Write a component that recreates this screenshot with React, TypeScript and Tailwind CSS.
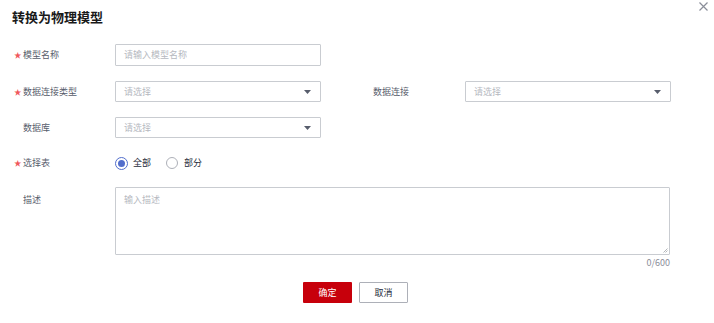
import React from "react";

const font = { fontFamily: '"Noto Sans CJK SC", "Noto Sans", sans-serif' };

function Label({ text, required }: { text: string; required?: boolean }) {
  return (
    <div className="flex w-[101px] shrink-0 items-center text-[9px] text-[#575d6c]">
      <span className="w-[9px] text-[7.5px] leading-none text-[#f0585d]">{required ? "★" : ""}</span>
      <span>{text}</span>
    </div>
  );
}

function Select({ w = "w-[206px]" }: { w?: string }) {
  return (
    <div className={`flex h-[21px] ${w} items-center justify-between rounded-[1px] border border-[#c9ccd1] pl-[8px] pr-[9px]`}>
      <span className="text-[9px] text-[#b6b9bf]">请选择</span>
      <svg width="7" height="4" viewBox="0 0 7 4">
        <path d="M0 0 H7 L3.5 4 Z" fill="#575d6c" />
      </svg>
    </div>
  );
}

export default function App() {
  return (
    <div className="relative h-[323px] w-[714px] bg-white" style={font}>
      <div className="absolute right-[6px] top-[2px]">
        <svg width="9" height="9" viewBox="0 0 9 9">
          <path d="M0.5 0.5 L8.5 8.5 M8.5 0.5 L0.5 8.5" stroke="#8a8e99" strokeWidth="1.2" />
        </svg>
      </div>
      <div className="pl-[12px] pt-[7px] text-[13px] font-bold leading-[20px] text-[#191919]">转换为物理模型</div>

      <div className="mt-[17px] flex flex-col pl-[14px]">
        <div className="flex h-[22px] items-center">
          <Label text="模型名称" required />
          <div className="flex h-[22px] w-[206px] items-center rounded-[1px] border border-[#c9ccd1] pl-[8px] text-[9px] text-[#b6b9bf]">
            请输入模型名称
          </div>
        </div>

        <div className="mt-[15px] flex h-[21px] items-center">
          <Label text="数据连接类型" required />
          <Select />
          <div className="ml-[52px] w-[92px] text-[9px] text-[#575d6c]">数据连接</div>
          <Select />
        </div>

        <div className="mt-[15px] flex h-[21px] items-center">
          <Label text="数据库" />
          <Select />
        </div>

        <div className="mt-[14px] flex h-[22px] items-center">
          <Label text="选择表" required />
          <div className="flex items-center text-[9px] text-[#252b3a]">
            <span className="flex h-[13px] w-[13px] items-center justify-center rounded-full border border-[#526ecc]">
              <span className="h-[7px] w-[7px] rounded-full bg-[#526ecc]" />
            </span>
            <span className="ml-[5px]">全部</span>
            <span className="ml-[15px] h-[12px] w-[12px] rounded-full border border-[#adb0b8]" />
            <span className="ml-[6px]">部分</span>
          </div>
        </div>

        <div className="mt-[13px] flex items-start">
          <div className="w-[101px] shrink-0 pl-[9px] pt-[6px] text-[9px] text-[#575d6c]">描述</div>
          <div className="flex flex-col items-end">
            <div className="relative h-[68px] w-[555px] rounded-[1px] border border-[#c9ccd1] pl-[8px] pt-[5px] text-[9px] text-[#b6b9bf]">
              输入描述
              <svg className="absolute bottom-[1px] right-[1px]" width="5" height="5" viewBox="0 0 5 5">
                <path d="M4.5 0.5 L0.5 4.5 M4.5 2.5 L2.5 4.5" stroke="#a0a3a8" strokeWidth="0.8" />
              </svg>
            </div>
            <div className="mt-[1px] text-[9px] leading-[14px] text-[#8a8e99]">0/600</div>
          </div>
        </div>
      </div>

      <div className="mt-[12px] flex justify-center gap-[7px] pr-[3px]">
        <div className="flex h-[21px] w-[49px] items-center justify-center rounded-[1px] bg-[#c7000b] text-[9px] text-white">确定</div>
        <div className="flex h-[21px] w-[49px] items-center justify-center rounded-[1px] border border-[#adb0b8] text-[9px] text-[#252b3a]">取消</div>
      </div>
    </div>
  );
}
